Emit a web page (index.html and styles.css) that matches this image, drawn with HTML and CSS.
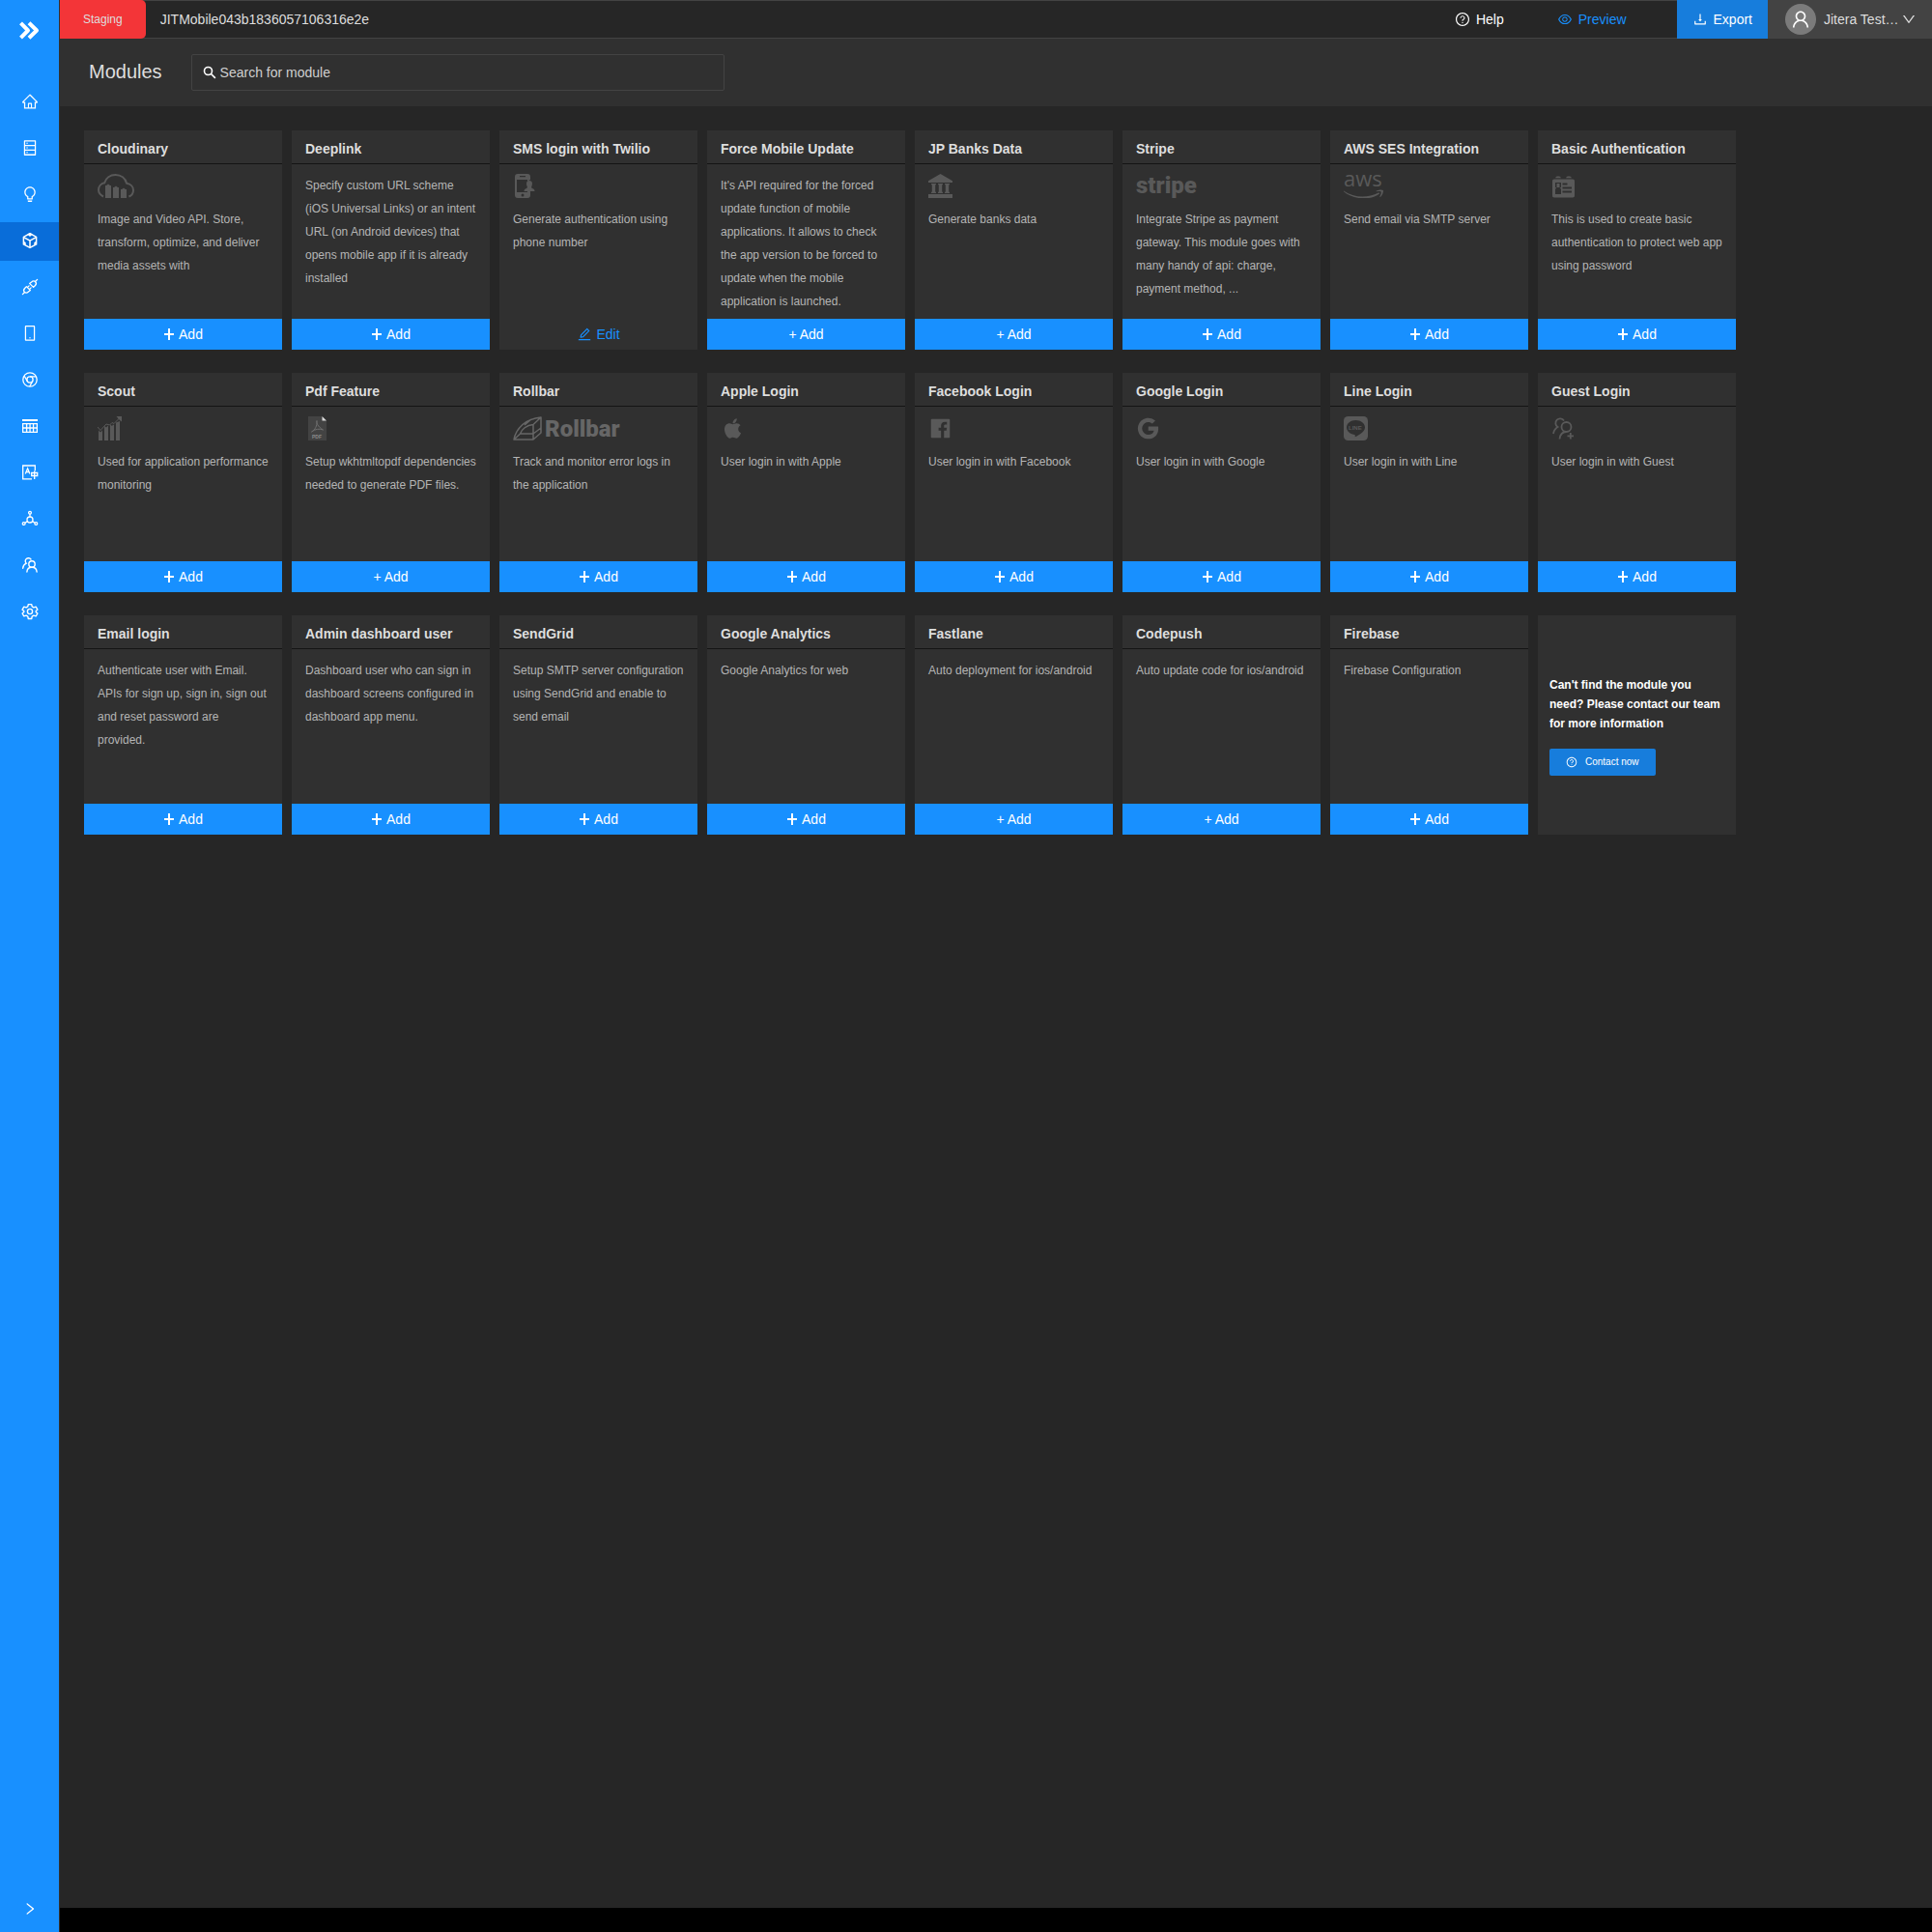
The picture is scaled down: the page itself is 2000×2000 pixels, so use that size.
FILE: index.html
```html
<!DOCTYPE html>
<html lang="en">
<head>
<meta charset="utf-8">
<meta name="viewport" content="width=device-width, initial-scale=1">
<title>Modules</title>
<link rel="stylesheet" href="styles.css">
</head>
<body>
<svg class="sprite" aria-hidden="true">
  <symbol id="i-home" viewBox="0 0 1024 1024"><path d="M946.5 505L560.1 118.8l-25.9-25.9a31.5 31.5 0 00-44.4 0L77.5 505a63.9 63.9 0 00-18.8 46c.4 35.2 29.7 63.3 64.9 63.3h42.5V940h691.8V614.3h43.4c17.1 0 33.2-6.7 45.3-18.8a63.6 63.6 0 0018.7-45.3c0-17-6.7-33.1-18.8-45.2zM568 868H456V664h112v204zm217.9-325.7V868H632V640c0-22.1-17.9-40-40-40H432c-22.1 0-40 17.9-40 40v228H238.1V542.3h-96l370-369.7 23.1 23.1L882 542.3h-96.1z"/></symbol>
  <symbol id="i-db" viewBox="0 0 1024 1024"><path d="M832 64H192c-17.7 0-32 14.3-32 32v832c0 17.7 14.3 32 32 32h640c17.7 0 32-14.3 32-32V96c0-17.7-14.3-32-32-32zm-600 72h560v208H232V136zm560 480H232V408h560v208zm0 272H232V680h560v208zM304 240a40 40 0 1080 0 40 40 0 10-80 0zm0 272a40 40 0 1080 0 40 40 0 10-80 0zm0 272a40 40 0 1080 0 40 40 0 10-80 0z"/></symbol>
  <symbol id="i-bulb" viewBox="0 0 1024 1024"><path d="M632 888H392c-4.400 0-8 3.600-8 8v32c0 17.700 14.300 32 32 32h192c17.700 0 32-14.300 32-32v-32c0-4.400-3.600-8-8-8zM512 64c-181.100 0-328 146.900-328 328 0 121.400 66 227.400 164 284.100V792c0 17.700 14.300 32 32 32h264c17.700 0 32-14.300 32-32V676.100c98-56.700 164-162.700 164-284.100 0-181.100-146.900-328-328-328zm127.900 549.800L604 634.600V752H420V634.600l-35.900-20.800C305.400 568.300 256 484.500 256 392c0-141.400 114.600-256 256-256s256 114.600 256 256c0 92.500-49.400 176.300-128.100 221.800z"/></symbol>
  <symbol id="i-cube" viewBox="0 0 18 18"><g fill="none" stroke="currentColor" stroke-width="1.500" stroke-linejoin="round"><path d="M9 1.700l6.600 3.600v7.600L9 16.400l-6.600-3.500V5.300z"/><path d="M3 5.800l6 3.300 6-3.300M9 9v7"/></g><path d="M6.300 2.600L9 1.100l2.700 1.500L9 5zM2 9.500l2.700 1.400v3L2 12.600zM16 9.500l-2.700 1.400v3l2.700-1.300z"/></symbol>
  <symbol id="i-api" viewBox="0 0 18 18"><g fill="none" stroke="currentColor" stroke-width="1.300" stroke-linecap="round" stroke-linejoin="round"><path d="M8.600 5.400l4 4 1.600-1.600c1.600-1.600 1.500-3 .5-4.100-1.100-1.100-2.700-1.100-4.100.2zM14.700 3.300L16.600 1.400M9.400 12.600l-4-4-1.600 1.600c-1.600 1.600-1.500 3-.5 4.100 1.100 1.100 2.700 1.100 4.100-.2zM3.300 14.700l-1.900 1.900M6.400 9.600l1.700-1.700M8.400 11.600l1.700-1.700"/></g></symbol>
  <symbol id="i-mobile" viewBox="0 0 1024 1024"><path d="M744 62H280c-35.300 0-64 28.700-64 64v768c0 35.300 28.700 64 64 64h464c35.300 0 64-28.700 64-64V126c0-35.300-28.700-64-64-64zm-8 824H288V134h448v752zM472 784a40 40 0 1080 0 40 40 0 10-80 0z"/></symbol>
  <symbol id="i-chrome" viewBox="0 0 18 18"><g fill="none" stroke="currentColor" stroke-width="1.300"><circle cx="9" cy="9" r="7.200"/><circle cx="9" cy="9" r="3.100"/><path d="M9 5.900h6.200M6.300 10.600L3.200 5.200M11.700 10.600L8.700 16"/></g></symbol>
  <symbol id="i-table" viewBox="0 0 18 18"><path d="M1 2h16v2H1z"/><path fill-rule="evenodd" d="M1 6h16v10H1zM2.300 7.300v3h2.600v-3zM6.300 7.300v3h2.100v-3zM9.700 7.300v3h2.200v-3zM13.200 7.300v3h2.500v-3zM2.300 11.700v3h2.600v-3zM6.300 11.700v3h2.100v-3zM9.700 11.700v3h2.200v-3zM13.200 11.700v3h2.500v-3z"/></symbol>
  <symbol id="i-translate" viewBox="0 0 18 18"><g fill="none" stroke="currentColor" stroke-width="1.300"><path d="M11 15.900H1.700V2h12.600v5.200M4.300 10.500L6.600 5l2.300 5.500M5.200 8.700H8M10.700 9.500h6v3h-6zM13.700 7.500v8.500"/></g></symbol>
  <symbol id="i-deploy" viewBox="0 0 18 18"><g fill="none" stroke="currentColor" stroke-width="1.300"><circle cx="9" cy="10" r="3"/><circle cx="9" cy="2.700" r="1.400"/><circle cx="2.700" cy="14" r="1.400"/><circle cx="15.300" cy="14" r="1.400"/><path d="M9 4.100V7M6.500 11.600l-2.600 1.700M11.500 11.600l2.600 1.700"/></g></symbol>
  <symbol id="i-team" viewBox="0 0 18 18"><g fill="none" stroke="currentColor" stroke-width="1.400" stroke-linecap="round"><circle cx="11" cy="8" r="3.200"/><path d="M5.900 16c.2-2.900 2.300-4.800 5.100-4.800s4.900 1.900 5.100 4.800M10 3A3.200 3.200 0 105.200 7.200C3 8.200 1.900 9.800 1.700 12.200"/></g></symbol>
  <symbol id="i-gear" viewBox="0 0 18 18"><g fill="none" stroke="currentColor" stroke-width="1.400" stroke-linejoin="round"><circle cx="9" cy="9" r="2.600"/><path d="M7.300 1.600h3.400l.5 2.300 1.700 1 2.300-.7 1.700 2.900L15.200 8.600v1l1.700 1.400-1.700 2.900-2.300-.7-1.700 1-.5 2.300H7.300l-.5-2.300-1.700-1-2.300.7L1.100 11l1.700-1.500v-1L1.100 7.100l1.700-2.900 2.300.7 1.700-1z"/></g></symbol>
  <symbol id="i-right" viewBox="0 0 1024 1024"><path d="M765.700 486.800L314.900 134.700A7.970 7.970 0 00302 141v77.300c0 4.900 2.300 9.600 6.100 12.600l360 281.100-360 281.100c-3.900 3-6.100 7.700-6.100 12.600V883c0 6.700 7.700 10.400 12.900 6.300l450.800-352.100a31.960 31.960 0 000-50.400z"/></symbol>
  <symbol id="i-down" viewBox="0 0 1024 1024"><path d="M884 256h-75c-5.100 0-9.900 2.500-12.900 6.600L512 654.200 227.900 262.600c-3-4.100-7.800-6.600-12.900-6.600h-75c-6.500 0-10.300 7.400-6.500 12.700l352.600 486.100c12.800 17.600 39 17.600 51.700 0l352.600-486.100c3.900-5.300.1-12.700-6.400-12.700z"/></symbol>
  <symbol id="i-help" viewBox="0 0 1024 1024"><path d="M512 64C264.600 64 64 264.600 64 512s200.600 448 448 448 448-200.600 448-448S759.400 64 512 64zm0 820c-205.400 0-372-166.600-372-372s166.600-372 372-372 372 166.600 372 372-166.600 372-372 372z"/><path d="M623.600 316.700C593.600 290.400 554 276 512 276s-81.600 14.500-111.600 40.700C369.200 344 352 380.700 352 420v7.600c0 4.400 3.600 8 8 8h48c4.400 0 8-3.600 8-8V420c0-44.100 43.100-80 96-80s96 35.900 96 80c0 31.100-22 59.600-56.100 72.700-21.200 8.100-39.200 22.300-52.100 40.900-13.100 19-19.900 41.800-19.900 64.900V620c0 4.400 3.600 8 8 8h48c4.400 0 8-3.600 8-8v-22.700a48.300 48.300 0 0130.900-44.800c59-22.700 97.100-74.700 97.100-132.500.1-39.300-17.100-76-48.300-103.300zM472 732a40 40 0 1080 0 40 40 0 10-80 0z"/></symbol>
  <symbol id="i-eye" viewBox="0 0 1024 1024"><path d="M942.200 486.200C847.400 286.500 704.100 186 512 186c-192.200 0-335.400 100.500-430.200 300.300a60.300 60.300 0 000 51.500C176.600 737.500 319.900 838 512 838c192.200 0 335.400-100.500 430.200-300.300 7.700-16.200 7.700-35 0-51.500zM512 766c-161.300 0-279.400-81.800-362.700-254C232.600 339.800 350.700 258 512 258c161.300 0 279.400 81.800 362.700 254C791.500 684.200 673.400 766 512 766zm-4-430c-97.200 0-176 78.800-176 176s78.800 176 176 176 176-78.800 176-176-78.800-176-176-176zm0 288c-61.900 0-112-50.100-112-112s50.100-112 112-112 112 50.100 112 112-50.100 112-112 112z"/></symbol>
  <symbol id="i-download" viewBox="0 0 1024 1024"><path d="M505.700 661a8 8 0 0012.600 0l112-141.700c4.100-5.200.4-12.900-6.300-12.900h-74.100V168c0-4.400-3.600-8-8-8h-60c-4.400 0-8 3.600-8 8v338.300H400c-6.700 0-10.400 7.700-6.300 12.900l112 141.800zM878 626h-60c-4.400 0-8 3.600-8 8v154H214V634c0-4.400-3.600-8-8-8h-60c-4.400 0-8 3.600-8 8v198c0 17.700 14.300 32 32 32h684c17.700 0 32-14.300 32-32V634c0-4.400-3.600-8-8-8z"/></symbol>
  <symbol id="i-user" viewBox="0 0 1024 1024"><path d="M858.500 763.600a374 374 0 00-80.600-119.500 375.630 375.630 0 00-119.500-80.600c-.4-.2-.8-.3-1.200-.5C719.500 518 760 444.700 760 362c0-137-111-248-248-248S264 225 264 362c0 82.700 40.500 156 102.800 201.100-.4.2-.8.3-1.200.5-44.800 18.900-85 46-119.500 80.600a375.630 375.630 0 00-80.600 119.500A371.700 371.700 0 00136 901.800a8 8 0 008 8.200h60c4.400 0 7.900-3.500 8-7.800 2-77.200 33-149.500 87.800-204.300 56.700-56.700 132-87.900 212.200-87.900s155.500 31.200 212.200 87.900C779 752.700 810 825 812 902.200c.1 4.400 3.600 7.800 8 7.800h60a8 8 0 008-8.200c-1-47.800-10.900-94.300-29.500-138.200zM512 534c-45.900 0-89.100-17.900-121.600-50.400S340 407.900 340 362c0-45.900 17.900-89.100 50.400-121.600S466.100 190 512 190s89.100 17.900 121.600 50.400S684 316.100 684 362c0 45.900-17.900 89.100-50.400 121.600S557.900 534 512 534z"/></symbol>
  <symbol id="i-search" viewBox="0 0 14 14"><g fill="none" stroke="currentColor" stroke-width="1.600"><circle cx="5.500" cy="5.500" r="4"/><path d="M8.500 8.500l4.400 4.400"/></g></symbol>
  <symbol id="i-edit" viewBox="0 0 1024 1024"><path d="M257.700 752c2 0 4-.2 6-.5L431.900 722c2-.4 3.900-1.300 5.300-2.800l423.900-423.900a9.960 9.960 0 000-14.100L694.900 114.900c-1.900-1.900-4.400-2.900-7.100-2.900s-5.200 1-7.100 2.900L256.800 538.800c-1.500 1.500-2.400 3.300-2.800 5.300l-29.500 168.200a33.500 33.500 0 009.400 29.800c6.600 6.400 14.900 9.900 23.800 9.900zm67.400-174.400L687.800 215l73.300 73.300-362.700 362.600-88.900 15.700 15.600-89zM880 836H144c-17.700 0-32 14.300-32 32v36c0 4.400 3.600 8 8 8h784c4.400 0 8-3.600 8-8v-36c0-17.700-14.300-32-32-32z"/></symbol>
  <symbol id="i-plus" viewBox="0 0 14 14"><path d="M5 1h2v12H5zM1 6h10v2H1z"/></symbol>
</svg>

<div class="app">
  <nav class="sidebar" aria-label="Main">
    <a class="logo" href="#" aria-label="Jitera"><svg width="21" height="19" viewBox="0 0 21 19"><path fill="none" stroke="currentColor" stroke-width="4" stroke-linejoin="round" d="M1.500 1.800l7.500 7.700-7.500 7.700M10 1.800l8 7.700-8 7.700"/></svg></a>
    <ul class="nav">
      <li><a href="#" aria-label="Home"><svg class="nav-icon"><use href="#i-home"/></svg></a></li>
      <li><a href="#" aria-label="Database"><svg class="nav-icon"><use href="#i-db"/></svg></a></li>
      <li><a href="#" aria-label="Logic"><svg class="nav-icon"><use href="#i-bulb"/></svg></a></li>
      <li><a class="active" href="#" aria-label="Modules" aria-current="page"><svg class="nav-icon"><use href="#i-cube"/></svg></a></li>
      <li><a href="#" aria-label="API"><svg class="nav-icon"><use href="#i-api"/></svg></a></li>
      <li><a href="#" aria-label="Mobile"><svg class="nav-icon"><use href="#i-mobile"/></svg></a></li>
      <li><a href="#" aria-label="Web"><svg class="nav-icon"><use href="#i-chrome"/></svg></a></li>
      <li><a href="#" aria-label="Dashboard"><svg class="nav-icon"><use href="#i-table"/></svg></a></li>
      <li><a href="#" aria-label="Translations"><svg class="nav-icon"><use href="#i-translate"/></svg></a></li>
      <li><a href="#" aria-label="Deployment"><svg class="nav-icon"><use href="#i-deploy"/></svg></a></li>
      <li><a href="#" aria-label="Team"><svg class="nav-icon"><use href="#i-team"/></svg></a></li>
      <li><a href="#" aria-label="Settings"><svg class="nav-icon"><use href="#i-gear"/></svg></a></li>
    </ul>
    <button class="expand" type="button" aria-label="Expand menu"><svg class="icon"><use href="#i-right"/></svg></button>
  </nav>

  <div class="page">
    <header class="topbar">
      <button class="staging" type="button">Staging</button>
      <span class="project">JITMobile043b1836057106316e2e</span>
      <a class="top-link help" href="#"><svg class="icon"><use href="#i-help"/></svg>Help</a>
      <a class="top-link preview" href="#"><svg class="icon"><use href="#i-eye"/></svg>Preview</a>
      <button class="export" type="button"><svg class="icon"><use href="#i-download"/></svg>Export</button>
      <button class="account" type="button"><span class="avatar"><svg width="22" height="22"><use href="#i-user"/></svg></span><span class="account-name">Jitera Test…</span><svg class="icon"><use href="#i-down"/></svg></button>
    </header>

    <div class="toolbar">
      <h1>Modules</h1>
      <label class="search"><svg class="icon"><use href="#i-search"/></svg><input type="search" placeholder="Search for module" aria-label="Search for module"></label>
    </div>

    <main class="modules">
      <article class="card"><h2>Cloudinary</h2><div class="card-body">
        <svg class="brand" width="38" height="25" viewBox="0 0 38 25"><path fill="none" stroke="currentColor" stroke-width="2" d="M6 23.500C2.800 22 1 19.600 1 16.600c0-3.600 2.600-6.700 6.200-7.300C8.600 4.300 13 1 18.500 1c5.600 0 10.200 3.400 11.600 8.700 4 .6 6.900 3.400 6.900 7.200 0 3-1.600 5.300-4.600 6.600"/><path d="M8 12h1l2-1.500L13 12h1v13H8zM16 14h1l2-1.500 2 1.500h1v11h-6zM24 16h1l2-1.500 2 1.500h1v9h-6z"/></svg>
        <p>Image and Video API. Store, transform, optimize, and deliver media assets with</p></div>
        <button class="action" type="button"><svg class="icon"><use href="#i-plus"/></svg>Add</button></article>

      <article class="card"><h2>Deeplink</h2><div class="card-body">
        <p>Specify custom URL scheme (iOS Universal Links) or an intent URL (on Android devices) that opens mobile app if it is already installed</p></div>
        <button class="action" type="button"><svg class="icon"><use href="#i-plus"/></svg>Add</button></article>

      <article class="card"><h2>SMS login with Twilio</h2><div class="card-body">
        <svg class="brand" width="25" height="25" viewBox="0 0 25 25"><path fill-rule="evenodd" d="M5 0h10c2 0 3 1 3 3v3c-1.500.3-3 1.600-3 3.500V6H4v13h11v-1h3v4c0 2-1 3-3 3H5c-2 0-3-1-3-3V3c0-2 1-3 3-3zm2 2v1.300h6V2zm3 18.500a1.500 1.500 0 100 3 1.500 1.500 0 000-3z"/><path d="M17 7c3 0 3.500 3 2.500 5.500-.6 1.500-.6 2 .5 2.400 1.600.6 2.500 1.200 2.500 3.100h-11c0-1.900 1-2.500 2.500-3.100 1.100-.4 1.100-.9.500-2.400C13.500 10 14 7 17 7z"/></svg>
        <p>Generate authentication using phone number</p></div>
        <button class="action edit" type="button"><svg class="icon"><use href="#i-edit"/></svg>Edit</button></article>

      <article class="card"><h2>Force Mobile Update</h2><div class="card-body">
        <p>It's API required for the forced update function of mobile applications. It allows to check the app version to be forced to update when the mobile application is launched.</p></div>
        <button class="action" type="button">+ Add</button></article>

      <article class="card"><h2>JP Banks Data</h2><div class="card-body">
        <svg class="brand" width="25" height="25" viewBox="0 0 25 25"><path d="M12.500 0L25 7.200V9H0V7.200zM0 21h25v4H0zM3 10h5v1.200H7.200v7.600H8V20H3v-1.200h.8v-7.600H3zM10 10h5v1.200h-.8v7.600h.8V20h-5v-1.200h.8v-7.600H10zM17 10h5v1.200h-.8v7.600h.8V20h-5v-1.200h.8v-7.600H17z"/></svg>
        <p>Generate banks data</p></div>
        <button class="action" type="button">+ Add</button></article>

      <article class="card"><h2>Stripe</h2><div class="card-body">
        <svg class="brand" width="72" height="25" viewBox="0 0 72 25"><text class="word-stripe" x="0" y="20">stripe</text></svg>
        <p>Integrate Stripe as payment gateway. This module goes with many handy of api: charge, payment method, ...</p></div>
        <button class="action" type="button"><svg class="icon"><use href="#i-plus"/></svg>Add</button></article>

      <article class="card"><h2>AWS SES Integration</h2><div class="card-body">
        <svg class="brand" width="48" height="25" viewBox="0 0 48 25"><text class="word-aws" x="0" y="13">aws</text><path d="M0 17.500c11 7.800 25 7.600 36 2 1-.4 1.600.5.800 1.200C27 28 9 26.500 0 18.300zM34 17.500c3-1.400 6-1.300 6.800-.6.700 1-.6 5.200-2.800 7-.6.400-.9.100-.6-.4 1-2.200 1.600-4.300 1.200-4.900-.5-.7-2.600-.5-4.400-.4-.7 0-.8-.4-.2-.7z"/></svg>
        <p>Send email via SMTP server</p></div>
        <button class="action" type="button"><svg class="icon"><use href="#i-plus"/></svg>Add</button></article>

      <article class="card"><h2>Basic Authentication</h2><div class="card-body">
        <svg class="brand" width="25" height="25" viewBox="0 0 25 25"><path fill-rule="evenodd" d="M3 5.500h19c1.400 0 2 .8 2 2v15c0 1.200-.6 2-2 2H3c-1.400 0-2-.8-2-2v-15c0-1.200.6-2 2-2zm1 3.500v5h1.500c-1 .8-1.500 1.500-1.500 3v4h6v-4c0-1.500-.5-2.200-1.500-3H10V9zm7.500.5v2h5v-2zm0 4v2H21v-2zm0 4v2H21v-2z"/><path d="M4 4.200c.5-1 1.200-1.700 3-1.700s2.500.7 3 1.700zM15 4.200c.5-1 1.200-1.700 3-1.700s2.500.7 3 1.700zM5.500 10h3v4h-3z"/></svg>
        <p>This is used to create basic authentication to protect web app using password</p></div>
        <button class="action" type="button"><svg class="icon"><use href="#i-plus"/></svg>Add</button></article>

      <article class="card"><h2>Scout</h2><div class="card-body">
        <svg class="brand" width="25" height="25" viewBox="0 0 25 25"><path d="M1 14.500l2 2 2-2V25H1zM7 10l2 1.500 2-2V25H7zM13 8.500l2 1.500 1-1.500 1 .5v16h-4zM19 6.500L23 5v20h-4z"/><path fill="none" stroke="currentColor" d="M0 11l3 3.500 6-6.500 3.500 1L15 6.500l2 1L23 1.500"/><path d="M19.500 0H25v5.500l-2-1.500-1.500-1.500z"/></svg>
        <p>Used for application performance monitoring</p></div>
        <button class="action" type="button"><svg class="icon"><use href="#i-plus"/></svg>Add</button></article>

      <article class="card"><h2>Pdf Feature</h2><div class="card-body">
        <svg class="brand" width="25" height="25" viewBox="0 0 25 25"><path fill="#434343" d="M3 0h14l5 5v20H3z"/><path fill="#d9d9d9" d="M17.500 0L22 4.500h-4.500z"/><path fill="none" stroke="#6e6e6e" d="M12 4.500c-.8 2 .7 6 6.500 9.500-4-1.500-8-.8-12 2 3.500-2 6-6 5.500-11.500z"/><text class="word-pdf" x="7" y="23">PDF</text></svg>
        <p>Setup wkhtmltopdf dependencies needed to generate PDF files.</p></div>
        <button class="action" type="button">+ Add</button></article>

      <article class="card"><h2>Rollbar</h2><div class="card-body">
        <svg class="brand rollbar" width="124" height="25" viewBox="0 0 124 25"><path fill="none" stroke="currentColor" stroke-width="1.500" stroke-linejoin="round" d="M29 1C22 1.800 15 4 10 8.500 5 13 2 18 1 24h20l8-7zM1 24l6.500-6H21l8-6M7.500 18C9 13.500 14 9 21 8.500V24M21 8.500L29 1M12 9l7-6"/><text class="word-rollbar" x="33" y="21">Rollbar</text></svg>
        <p>Track and monitor error logs in the application</p></div>
        <button class="action" type="button"><svg class="icon"><use href="#i-plus"/></svg>Add</button></article>

      <article class="card"><h2>Apple Login</h2><div class="card-body">
        <svg class="brand" width="25" height="25" viewBox="0 0 1024 1024"><path d="M747.400 535.700c-.4-68.200 30.500-119.600 92.900-157.500-34.900-50-87.700-77.500-157.300-82.800-65.900-5.200-138 38.400-164.400 38.400-27.900 0-91.700-36.600-141.900-36.600C273.100 298.800 163 379.800 163 544.600c0 48.700 8.900 99 26.700 150.800 23.800 68.200 109.600 235.300 199.100 232.600 46.800-1.100 79.900-33.200 140.800-33.200 59.100 0 89.700 33.200 141.900 33.200 90.300-1.300 167.900-153.200 190.500-221.600-121.100-57.100-114.600-167.200-114.600-170.700zm-105.100-305c50.700-60.200 46.100-115 44.600-134.700-44.800 2.600-96.600 30.500-126.100 64.800-32.500 36.800-51.600 82.300-47.500 133.600 48.400 3.700 92.600-21.200 129-63.700z"/></svg>
        <p>User login in with Apple</p></div>
        <button class="action" type="button"><svg class="icon"><use href="#i-plus"/></svg>Add</button></article>

      <article class="card"><h2>Facebook Login</h2><div class="card-body">
        <svg class="brand" width="25" height="25" viewBox="0 0 1024 1024"><path d="M880 112H144c-17.700 0-32 14.300-32 32v736c0 17.700 14.300 32 32 32h736c17.700 0 32-14.300 32-32V144c0-17.700-14.300-32-32-32zm-92.400 233.500h-63.900c-50.100 0-59.800 23.800-59.800 58.800v77.100h119.600l-15.600 120.700h-104V912H539.200V602.200H434.900V481.400h104.300v-89c0-103.300 63.100-159.600 155.300-159.600 44.200 0 82.100 3.300 93.200 4.800v107.900z"/></svg>
        <p>User login in with Facebook</p></div>
        <button class="action" type="button"><svg class="icon"><use href="#i-plus"/></svg>Add</button></article>

      <article class="card"><h2>Google Login</h2><div class="card-body">
        <svg class="brand" width="25" height="25" viewBox="70 70 884 884"><path d="M881 442.400H519.700v148.500h206.400c-8.900 48-35.900 88.600-76.600 115.800-34.400 23-78.300 36.600-129.900 36.600-99.900 0-184.400-67.500-214.600-158.200-7.600-23-12-47.600-12-72.900s4.400-49.900 12-72.900c30.300-90.600 114.800-158.100 214.700-158.100 56.300 0 106.800 19.400 146.600 57.400l110-110.100c-66.500-62-153.200-100-256.600-100-149.900 0-279.600 86-342.700 211.400-26 51.800-40.800 110.400-40.800 172.400S151 632.800 177 684.600C240.100 810 369.800 896 519.700 896c103.600 0 190.400-34.400 253.800-93 72.500-66.800 114.400-165.200 114.400-282.100 0-27.200-2.400-53.300-6.900-78.500z"/></svg>
        <p>User login in with Google</p></div>
        <button class="action" type="button"><svg class="icon"><use href="#i-plus"/></svg>Add</button></article>

      <article class="card"><h2>Line Login</h2><div class="card-body">
        <svg class="brand" width="25" height="25" viewBox="0 0 25 25"><rect width="25" height="25" rx="4.500"/><path fill="#303030" d="M12.500 4C7.200 4 3 7.300 3 11.500c0 3.700 3.300 6.700 8 7.400 1 .2 1 .9.700 2.400 3.400-1.500 10.300-5.300 10.300-9.800C22 7.300 17.800 4 12.500 4z"/><text class="word-line" x="5" y="14">LINE</text></svg>
        <p>User login in with Line</p></div>
        <button class="action" type="button"><svg class="icon"><use href="#i-plus"/></svg>Add</button></article>

      <article class="card"><h2>Guest Login</h2><div class="card-body">
        <svg class="brand" width="25" height="25" viewBox="0 0 25 25"><g fill="none" stroke="currentColor" stroke-width="1.800"><circle cx="15.500" cy="11" r="5"/><path d="M8.500 23.500c.5-4.500 3-7.500 7-7.500M13 4.500A4.700 4.700 0 106.500 11C4 12.500 2.500 14.500 2 18M19.800 17v6.500M16.500 20.300H23"/></g></svg>
        <p>User login in with Guest</p></div>
        <button class="action" type="button"><svg class="icon"><use href="#i-plus"/></svg>Add</button></article>

      <article class="card"><h2>Email login</h2><div class="card-body">
        <p>Authenticate user with Email. APIs for sign up, sign in, sign out and reset password are provided.</p></div>
        <button class="action" type="button"><svg class="icon"><use href="#i-plus"/></svg>Add</button></article>

      <article class="card"><h2>Admin dashboard user</h2><div class="card-body">
        <p>Dashboard user who can sign in dashboard screens configured in dashboard app menu.</p></div>
        <button class="action" type="button"><svg class="icon"><use href="#i-plus"/></svg>Add</button></article>

      <article class="card"><h2>SendGrid</h2><div class="card-body">
        <p>Setup SMTP server configuration using SendGrid and enable to send email</p></div>
        <button class="action" type="button"><svg class="icon"><use href="#i-plus"/></svg>Add</button></article>

      <article class="card"><h2>Google Analytics</h2><div class="card-body">
        <p>Google Analytics for web</p></div>
        <button class="action" type="button"><svg class="icon"><use href="#i-plus"/></svg>Add</button></article>

      <article class="card"><h2>Fastlane</h2><div class="card-body">
        <p>Auto deployment for ios/android</p></div>
        <button class="action" type="button">+ Add</button></article>

      <article class="card"><h2>Codepush</h2><div class="card-body">
        <p>Auto update code for ios/android</p></div>
        <button class="action" type="button">+ Add</button></article>

      <article class="card"><h2>Firebase</h2><div class="card-body">
        <p>Firebase Configuration</p></div>
        <button class="action" type="button"><svg class="icon"><use href="#i-plus"/></svg>Add</button></article>

      <aside class="card contact">
        <p>Can't find the module you need? Please contact our team for more information</p>
        <button class="contact-btn" type="button"><svg width="12" height="12"><use href="#i-help"/></svg>Contact now</button>
      </aside>
    </main>
    <footer class="footer"></footer>
  </div>
</div>
</body>
</html>
```
FILE: styles.css
```css
* { box-sizing: border-box; }

body {
  margin: 0;
  background: #262626;
  color: #dedede;
  font: 14px/22px "Liberation Sans", Arial, sans-serif;
}

h1, h2, p, ul { margin: 0; padding: 0; }
ul { list-style: none; }
a { color: inherit; text-decoration: none; }
button { border: 0; padding: 0; font: inherit; color: inherit; background: none; cursor: pointer; }
svg { fill: currentColor; flex: none; display: block; }

.sprite { position: absolute; width: 0; height: 0; }
.icon { width: 16px; height: 16px; }

.app { display: flex; min-height: 100vh; }

/* Sidebar */
.sidebar {
  display: flex;
  flex-direction: column;
  flex: none;
  width: 62px;
  background: #1890ff;
  border-right: 1px solid #303030;
  color: #fff;
}
.logo { display: flex; justify-content: center; align-items: center; height: 62px; margin-bottom: 24px; }
.nav { display: flex; flex-direction: column; gap: 8px; }
.nav a { display: flex; justify-content: center; align-items: center; height: 40px; padding-bottom: 2px; }
.nav a.active { background: #096dd9; }
.nav-icon { width: 18px; height: 18px; }
.expand { display: flex; justify-content: center; align-items: center; height: 48px; margin-top: auto; }

/* Page column */
.page { display: flex; flex-direction: column; flex: 1; min-width: 0; }

.topbar {
  display: flex;
  align-items: stretch;
  height: 40px;
  line-height: 40px;
  box-shadow: inset 0 1px #434343, inset 0 -1px #434343;
}
.staging { padding: 0 24px; background: #f33538; border-radius: 0 5px 5px 0; font-size: 12px; }
.project { margin-left: 15px; margin-right: auto; }
.top-link { display: flex; align-items: center; gap: 6px; }
.help { margin-right: 55px; color: #fff; }
.preview { margin-right: 52px; color: #1890ff; }
.export { display: flex; align-items: center; gap: 6px; padding: 0 16px; background: #177ddc; color: #fff; }
.account { display: flex; align-items: center; width: 170px; padding: 0 16px 0 18px; background: #434343; }
.avatar {
  display: flex;
  align-items: center;
  justify-content: center;
  flex: none;
  width: 32px;
  height: 32px;
  margin-right: 8px;
  border-radius: 50%;
  background: #7b7b7b;
  color: #fff;
}
.account-name { margin-right: 2px; white-space: nowrap; }

.toolbar { display: flex; align-items: center; gap: 30px; height: 70px; padding: 0 30px; background: #303030; }
h1 { padding-bottom: 2px; font-size: 20px; font-weight: 400; line-height: 28px; }
.search {
  display: flex;
  align-items: center;
  gap: 4px;
  width: 552px;
  height: 38px;
  padding: 0 11px;
  border: 1px solid #434343;
  border-radius: 2px;
}
.search .icon { width: 14px; height: 14px; color: #fff; }
.search input { flex: 1; min-width: 0; padding: 0; border: 0; outline: 0; background: none; color: inherit; font: inherit; }
.search input::placeholder { color: #cfcfcf; opacity: 1; }

/* Module cards */
.modules {
  display: grid;
  grid-template-columns: repeat(auto-fill, 205px);
  grid-auto-rows: min-content;
  gap: 24px 10px;
  flex: 1;
  padding: 25px;
}
.card { display: flex; flex-direction: column; min-height: 227px; background: #303030; }
h2 { padding: 8px 14px 4px; border-bottom: 1px solid #141414; font-size: 14px; line-height: 22px; font-weight: 700; }
.card-body { flex: 1; padding: 10px 14px 0; color: #b5b5b5; font-size: 12px; line-height: 24px; }
.brand { margin-bottom: 10px; color: #595959; }
.action {
  display: flex;
  align-items: center;
  justify-content: center;
  gap: 2px;
  height: 32px;
  background: #1890ff;
  color: #fff;
}
.action .icon { width: 14px; height: 14px; }
.action.edit { gap: 4px; background: none; color: #1890ff; }
.action.edit .icon { width: 16px; height: 16px; }

.contact {
  align-items: flex-start;
  justify-content: center;
  gap: 16px;
  padding: 0 12px;
  color: #fff;
  font-size: 12px;
  font-weight: 700;
  line-height: 20px;
}
.contact-btn {
  display: flex;
  align-items: center;
  gap: 8px;
  height: 28px;
  padding: 0 17px;
  border-radius: 2px;
  background: #177ddc;
  font-size: 10px;
  font-weight: 400;
}

/* Lettering inside brand marks */
.word-stripe { font: 900 24px Roboto, sans-serif; }
.word-aws { font: 400 22px "Open Sans", sans-serif; }
.word-pdf { font: 700 5px "Liberation Sans", sans-serif; fill: #8c8c8c; }
.word-rollbar { font: 900 24px Roboto, sans-serif; }
.word-line { font: 700 6px "Liberation Sans", sans-serif; }
.rollbar { color: #666; }

.footer { height: 25px; background: #000; }
```
